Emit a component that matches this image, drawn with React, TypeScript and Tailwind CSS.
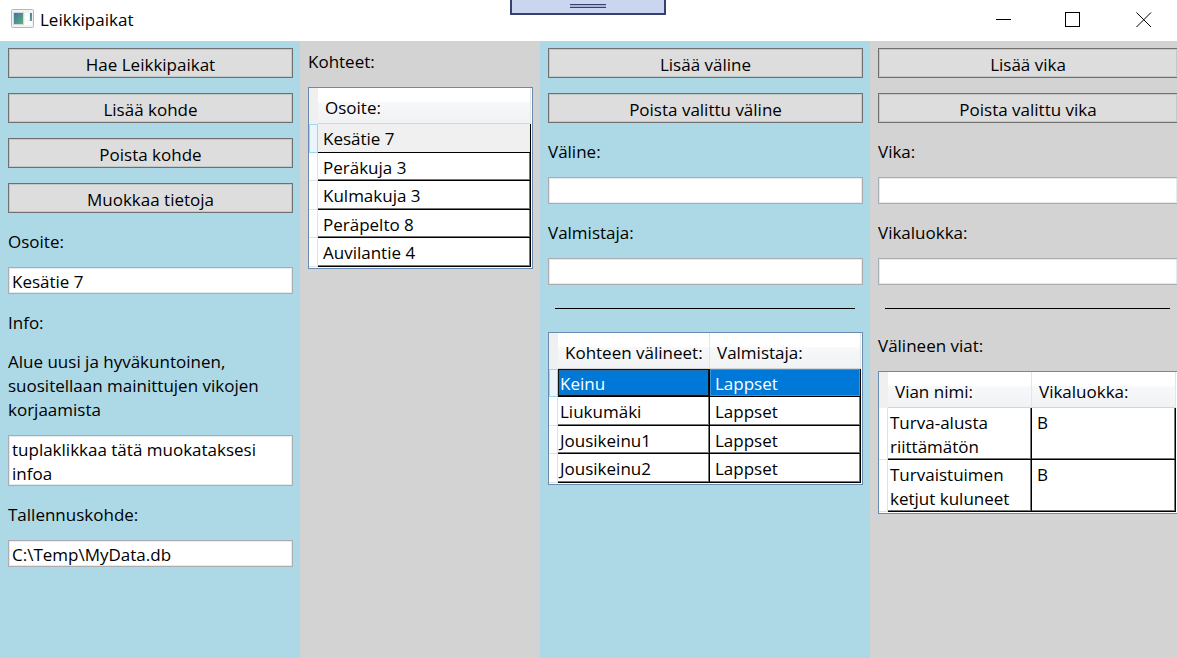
import { ReactNode } from "react";

function Button({ children }: { children: ReactNode }) {
  return (
    <button type="button" className="flex h-[30px] w-full shrink-0 items-center justify-center border border-[#707070] bg-[#dddddd] pt-1 shadow-[inset_0_0_0_1px_#c4c8c9]">
      {children}
    </button>
  );
}

function Field({ id, label, value = "" }: { id: string; label: string; value?: string }) {
  return (
    <>
      <label htmlFor={id} className="-mb-0.5 pt-0.5">{label}</label>
      <input
        id={id}
        type="text"
        defaultValue={value}
        className="h-[27px] w-full rounded-none border border-[#abadb3] bg-white px-[3px] pt-0.5 shadow-[inset_0_0_0_1px_#e6eaec] outline-none"
      />
    </>
  );
}

function Column({ tone, children }: { tone: "blue" | "gray"; children: ReactNode }) {
  return (
    <section className={`flex min-w-0 flex-col gap-[15px] pt-[7px] pr-[7px] pl-2 ${tone === "blue" ? "bg-[#add8e6]" : "bg-[#d3d3d3]"}`}>
      {children}
    </section>
  );
}

function Separator() {
  return <hr className="my-2 mr-2 ml-[7px] border-0 border-t border-black" />;
}

type GridProps = {
  label: string;
  headers: string[];
  rows: string[][];
  firstWidth?: string;
  cellPad?: string;
  active?: "soft" | "strong";
};

function cellTone(on: GridProps["active"] | false, column: number) {
  if (on === "soft") return "bg-[#f0f0f0]";
  if (on === "strong") {
    return column === 0
      ? "bg-[#0078d7] text-white shadow-[inset_0_0_0_1px_#111111,inset_0_0_0_2px_#2b6ca6]"
      : "bg-[#0078d7] text-white shadow-[inset_0_0_0_1px_#3a95df]";
  }
  return "bg-white shadow-[inset_-1px_-1px_0_0_#777777]";
}

function DataGrid({ label, headers, rows, firstWidth = "", cellPad = "pl-0.5", active }: GridProps) {
  return (
    <div className="border border-[#688caf] bg-white pr-px pb-px">
      <table aria-label={label} className="w-full table-fixed border-separate border-spacing-0 text-left">
        <thead>
          <tr className="h-[36px]">
            <td className="w-[9px] bg-[#f0f0f0] p-0" />
            {headers.map((h, i) => (
              <th
                key={h}
                scope="col"
                className={`border-r border-b border-r-[#e3e5e8] border-b-[#d5d5d5] bg-linear-to-b from-white from-40% via-[#f7f8fa] via-42% to-[#f1f2f4] p-0 pt-1 pl-[7px] align-middle font-normal whitespace-nowrap ${i === 0 ? firstWidth : ""}`}
              >
                {h}
              </th>
            ))}
          </tr>
        </thead>
        <tbody>
          {rows.map((row, r) => {
            const on = r === 0 && active;
            return (
              <tr key={row[0]} className={active === "soft" ? "h-[29px] even:h-[28px]" : "h-[28px] even:h-[29px]"}>
                <td className={on ? "border border-[#98d8f5] bg-[#eaf6fc] p-0" : "border-r border-b border-[#dfe1e4] bg-white p-0"} />
                {row.map((cell, c) => (
                  <td
                    key={c}
                    className={`border-r border-b border-black p-0 pt-[3px] align-top ${c === 0 ? cellPad : "pl-[5px]"} ${cellTone(on, c)}`}
                  >
                    {cell}
                  </td>
                ))}
              </tr>
            );
          })}
        </tbody>
      </table>
    </div>
  );
}

function TitleBar() {
  return (
    <header className="relative flex h-[41px] shrink-0 items-center bg-white pb-1">
      <svg className="ml-[11px]" width="23" height="20" viewBox="0 0 23 20" aria-hidden="true">
        <defs>
          <linearGradient id="pane" x1="0" y1="0" x2="1" y2="1">
            <stop offset="0" stopColor="#3f6fa5" />
            <stop offset="1" stopColor="#5fb57b" />
          </linearGradient>
        </defs>
        <rect x="0.5" y="0.5" width="22" height="18" rx="1" fill="#f2f2f2" stroke="#b4b8bc" />
        <rect x="2.500" y="3.500" width="10" height="12" fill="url(#pane)" stroke="#d5d9dc" />
        <rect x="14" y="4" width="4" height="7" fill="#fdfdfd" />
        <rect x="14" y="12" width="7" height="4" fill="#fdfdfd" />
        <rect x="19" y="4" width="2" height="8" fill="url(#pane)" />
      </svg>
      <h1 className="ml-1.5 pt-0.5">Leikkipaikat</h1>
      <div className="absolute top-0 left-[510px] flex h-[15px] w-[156px] justify-center border-2 border-t-0 border-[#37416f] bg-[#cad5f0] pt-1">
        <span className="h-1 w-9 border-y border-[#37416f] bg-[#aab5d8]" />
      </div>
      <div className="ml-auto flex pr-[25px]">
        <button type="button" aria-label="Minimize" className="mr-[53px]">
          <svg width="16" height="16" fill="none" stroke="black" shapeRendering="crispEdges"><path d="M0 8.500h15" /></svg>
        </button>
        <button type="button" aria-label="Maximize" className="mr-[55px]">
          <svg width="16" height="16" fill="none" stroke="black" shapeRendering="crispEdges"><path d="M.5 1.500h14v14h-14z" /></svg>
        </button>
        <button type="button" aria-label="Close">
          <svg width="16" height="16" fill="none" stroke="black"><path d="M.5 1.500l14.500 14.500M15 1.500L.5 16" /></svg>
        </button>
      </div>
    </header>
  );
}

export default function App() {
  return (
    <div className="flex min-h-screen flex-col overflow-hidden font-['Open_Sans','Noto_Sans',sans-serif] text-[17px] leading-6 text-black">
      <TitleBar />
      <main className="grid flex-1 grid-cols-[300px_240px_330px_minmax(315px,1fr)]">
        <Column tone="blue">
          <Button>Hae Leikkipaikat</Button>
          <Button>Lisää kohde</Button>
          <Button>Poista kohde</Button>
          <Button>Muokkaa tietoja</Button>
          <Field id="osoite" label="Osoite:" value="Kesätie 7" />
          <label htmlFor="info" className="-mb-0.5 pt-0.5">Info:</label>
          <p className="-mb-0.5 pt-0.5">Alue uusi ja hyväkuntoinen, suositellaan mainittujen vikojen korjaamista</p>
          <textarea
            id="info"
            rows={2}
            defaultValue="tuplaklikkaa tätä muokataksesi infoa"
            className="h-[51px] w-full resize-none overflow-hidden rounded-none border border-[#abadb3] bg-white px-[3px] pt-0.5 shadow-[inset_0_0_0_1px_#e6eaec] outline-none"
          />
          <Field id="tallennus" label="Tallennuskohde:" value="C:\Temp\MyData.db" />
        </Column>
        <Column tone="gray">
          <h2 className="-mb-0.5 pt-0.5">Kohteet:</h2>
          <DataGrid
            label="Kohteet"
            headers={["Osoite:"]}
            rows={[["Kesätie 7"], ["Peräkuja 3"], ["Kulmakuja 3"], ["Peräpelto 8"], ["Auvilantie 4"]]}
            cellPad="pl-[5px]"
            active="soft"
          />
        </Column>
        <Column tone="blue">
          <Button>Lisää väline</Button>
          <Button>Poista valittu väline</Button>
          <Field id="valine" label="Väline:" />
          <Field id="valmistaja" label="Valmistaja:" />
          <Separator />
          <DataGrid
            label="Kohteen välineet"
            headers={["Kohteen välineet:", "Valmistaja:"]}
            rows={[["Keinu", "Lappset"], ["Liukumäki", "Lappset"], ["Jousikeinu1", "Lappset"], ["Jousikeinu2", "Lappset"]]}
            firstWidth="w-[152px]"
            active="strong"
          />
        </Column>
        <Column tone="gray">
          <Button>Lisää vika</Button>
          <Button>Poista valittu vika</Button>
          <Field id="vika" label="Vika:" />
          <Field id="vikaluokka" label="Vikaluokka:" />
          <Separator />
          <h2 className="-mb-0.5 pt-0.5">Välineen viat:</h2>
          <DataGrid
            label="Välineen viat"
            headers={["Vian nimi:", "Vikaluokka:"]}
            rows={[["Turva-alusta riittämätön", "B"], ["Turvaistuimen ketjut kuluneet", "B"]]}
            firstWidth="w-[144px]"
          />
        </Column>
      </main>
    </div>
  );
}
